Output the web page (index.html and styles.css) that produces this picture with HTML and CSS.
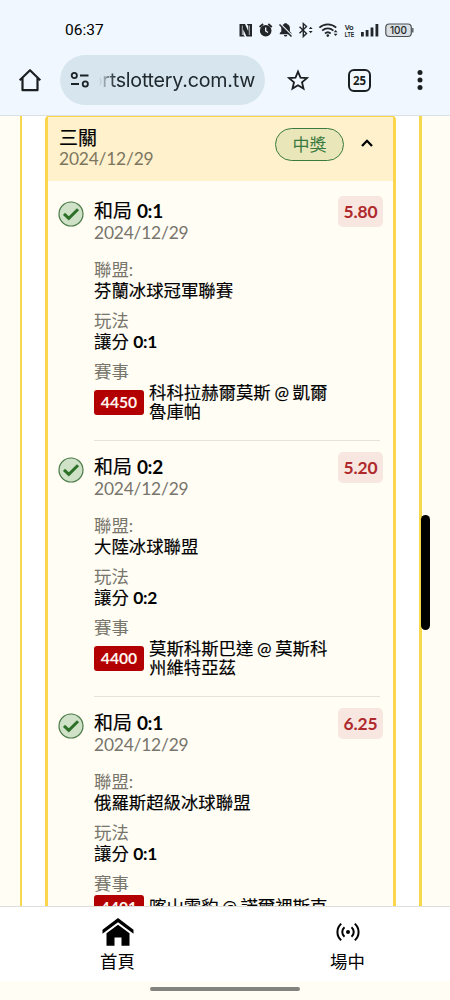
FILE: index.html
```html
<!DOCTYPE html>
<html lang="zh-Hant">
<head>
<meta charset="utf-8">
<title>運彩投注紀錄</title>
<link rel="stylesheet" href="styles.css">
</head>
<body>
<svg width="0" height="0" class="defs">
  <symbol id="check" viewBox="0 0 26 26">
    <circle cx="13" cy="13" r="12" fill="#cfe2c8" stroke="#4b7a48" stroke-width="1.2"/>
    <path d="M6 12.800l4.800 4.500 9.200-9" fill="none" stroke="#2c7128" stroke-width="3"/>
  </symbol>
</svg>
<div class="phone">
  <header class="browser">
    <div class="status">
      <span class="clock">06:37</span>
      <svg class="status-icons" width="180" height="18" viewBox="238 21 180 18">
        <g fill="#222628">
          <path d="M239.500 24h5.500l3.200 7v-5.200l-1.600-1.800h5.400v12.500h-5.500l-3.200-7v5.200l1.600 1.800h-5.400z"/>
          <path d="M242.300 25.500v9.500M249.300 25.500v9.500" stroke="#f0f7ff" stroke-width=".7"/>
          <circle cx="265.700" cy="30.700" r="5.800"/>
          <path d="M259.600 27l3.500-3M271.800 27l-3.500-3" stroke="#222628" stroke-width="1.800"/>
          <path d="M265.700 27.500v3.500l2.200 1.500" fill="none" stroke="#f0f7ff" stroke-width="1.300"/>
          <path d="M279.800 34.300v-1.300l1.500-1.500v-3.500c0-2 1.200-3.500 3-4v-.7h2.600v.7c1.800.5 3 2 3 4v3.500l1.500 1.500v1.300zM284 34.900h3.200c0 2.200-3.200 2.200-3.200 0z"/>
          <path d="M280.500 24l12 12" stroke="#f0f7ff" stroke-width="1.500"/>
          <path d="M279.500 24.500l12 12" stroke="#222628" stroke-width="1.500"/>
          <path d="M299.500 26.800l7 6.800-3.200 3V23.500l3.200 3-7 6.800" fill="none" stroke="#222628" stroke-width="1.400"/>
          <path d="M308.800 29l1.900-2.300 1.900 2.300zM308.800 31l1.900 2.300 1.900-2.300zM333.700 32.200l1.900-2.300 1.900 2.300zM333.700 33.800l1.900 2.300 1.900-2.300z"/>
          <path d="M319.400 27.700c4.700-4.400 12.100-4.400 16.800 0M322.200 30.700c3.300-3 7.900-3 11.200 0M325 33.500c1.700-1.500 4-1.500 5.700 0" fill="none" stroke="#222628" stroke-width="1.800"/>
          <circle cx="327.800" cy="35.600" r="1.300"/>
          <path d="M361 32h2.800v4.500H361zM365.700 30h2.800v6.500h-2.800zM370.600 27.500h2.800v9h-2.800zM375.500 24h2.800v12.500h-2.800z"/>
        </g>
        <text x="344.700" y="29.900" class="volte" textLength="9" lengthAdjust="spacingAndGlyphs">Vo</text>
        <text x="344.700" y="36.500" class="volte" textLength="9.500" lengthAdjust="spacingAndGlyphs">LTE</text>
        <rect x="385.800" y="24" width="25.500" height="12.500" rx="3.500" fill="#d9dfe3" stroke="#4b5053" stroke-width="1.200"/>
        <path d="M412.800 28v4.500" stroke="#4b5053" stroke-width="1.300"/>
        <text x="398.500" y="34" class="battery" text-anchor="middle">100</text>
      </svg>
    </div>
    <div class="toolbar">
      <svg class="home" width="24" height="24" viewBox="0 0 24 24"><path d="M1.700 12.200L12 2.200l10.300 10M4.500 10v12.200h15V10" fill="none" stroke="#1b1f21" stroke-width="2.200" stroke-linejoin="round"/></svg>
      <div class="address">
        <svg width="20" height="18" viewBox="0 0 20 18" fill="none" stroke="#1b2226" stroke-width="1.800"><circle cx="4.300" cy="4.500" r="2.600"/><path d="M10 4.500h8.500M1 13h8"/><circle cx="15.300" cy="13" r="2.600"/></svg>
        <span class="url"><span>ortslottery.com.tw</span></span>
      </div>
      <svg class="star" width="22" height="22" viewBox="0 0 22 22"><path d="M11 2.600l2.500 6 6.400.5-4.900 4.200 1.500 6.300-5.500-3.400-5.500 3.400L7 13.300 2.100 9.100l6.400-.5z" fill="none" stroke="#1b1f21" stroke-width="1.800"/></svg>
      <span class="tabs">25</span>
      <svg class="more" width="6" height="22" viewBox="0 0 6 22" fill="#1b1f21"><circle cx="3" cy="3.500" r="2.500"/><circle cx="3" cy="11" r="2.500"/><circle cx="3" cy="18.500" r="2.500"/></svg>
    </div>
  </header>

  <main class="page">
    <div class="panel">
      <section class="ticket">
        <div class="ticket-head">
          <div>
            <div class="name">三關</div>
            <div class="date">2024/12/29</div>
          </div>
          <span class="won">中獎</span>
          <svg class="chevron" width="14" height="10" viewBox="0 0 14 10"><path d="M2 8l5-5.200L12 8" fill="none" stroke="#000" stroke-width="2.300"/></svg>
        </div>
        <article class="leg">
          <svg class="mark"><use href="#check"/></svg>
          <div class="body">
            <span class="odds">5.80</span>
            <div class="name">和局 <b>0:1</b></div>
            <div class="date">2024/12/29</div>
            <dl>
              <dt>聯盟:</dt><dd>芬蘭冰球冠軍聯賽</dd>
              <dt>玩法</dt><dd>讓分 <b>0:1</b></dd>
              <dt>賽事</dt>
              <dd class="match"><span class="code">4450</span><span>科科拉赫爾莫斯 @ 凱爾<br>魯庫帕</span></dd>
            </dl>
          </div>
        </article>
        <article class="leg">
          <svg class="mark"><use href="#check"/></svg>
          <div class="body">
            <span class="odds">5.20</span>
            <div class="name">和局 <b>0:2</b></div>
            <div class="date">2024/12/29</div>
            <dl>
              <dt>聯盟:</dt><dd>大陸冰球聯盟</dd>
              <dt>玩法</dt><dd>讓分 <b>0:2</b></dd>
              <dt>賽事</dt>
              <dd class="match"><span class="code">4400</span><span>莫斯科斯巴達 @ 莫斯科<br>州維特亞茲</span></dd>
            </dl>
          </div>
        </article>
        <article class="leg">
          <svg class="mark"><use href="#check"/></svg>
          <div class="body">
            <span class="odds">6.25</span>
            <div class="name">和局 <b>0:1</b></div>
            <div class="date">2024/12/29</div>
            <dl>
              <dt>聯盟:</dt><dd>俄羅斯超級冰球聯盟</dd>
              <dt>玩法</dt><dd>讓分 <b>0:1</b></dd>
              <dt>賽事</dt>
              <dd class="match last"><span class="code">4401</span><span>喀山雪豹 @ 諾爾裡斯克</span></dd>
            </dl>
          </div>
        </article>
      </section>
    </div>
    <div class="scroll-thumb"></div>
  </main>

  <nav class="bottom">
    <a class="tab">
      <svg width="32" height="28" viewBox="0 0 32 28"><path d="M16 0l15.500 11.800v4L16 4.200.5 15.800v-4z"/><path d="M16 6.700l11.500 8.500v12.500h-8V19.500h-7v8.200h-8V15.200z"/></svg>
      <span>首頁</span>
    </a>
    <a class="tab">
      <svg width="24" height="28" viewBox="0 0 24 28" fill="none" stroke="#000" stroke-width="2"><circle cx="12" cy="14" r="2" fill="#000" stroke="none"/><path d="M8.500 9.200a6.300 6.300 0 0 0 0 9.600M15.500 9.200a6.300 6.300 0 0 1 0 9.600M5.200 5.700a11 11 0 0 0 0 16.600M18.800 5.700a11 11 0 0 1 0 16.600"/></svg>
      <span>場中</span>
    </a>
  </nav>
  <div class="gesture"><span></span></div>
</div>
</body>
</html>
```
FILE: styles.css
```css
* { box-sizing: border-box; }
body {
  margin: 0;
  font-family: Lato, "Noto Sans CJK TC", sans-serif;
  color: #000;
}
.defs { position: absolute; }
.phone {
  width: 450px;
  height: 1000px;
  display: flex;
  flex-direction: column;
  overflow: hidden;
  background: #fffdf4;
}

.browser { height: 115px; flex: none; background: #f0f7ff; }
.status {
  height: 52px;
  padding: 21px 32px 0 65px;
  display: flex;
  justify-content: space-between;
}
.clock { font: 400 15.5px/19px Roboto, sans-serif; letter-spacing: 0; }
.volte { font: bold 7px "Liberation Sans", sans-serif; fill: #222628; }
.battery { font: 500 10px Inter, sans-serif; fill: #222628; }
.toolbar { display: flex; align-items: center; height: 56px; padding-left: 18px; }
.address {
  width: 205px;
  height: 50px;
  margin-left: 18px;
  padding-left: 10px;
  border-radius: 25px;
  background: #d7e6ee;
  display: flex;
  align-items: center;
}
.url {
  width: 156px;
  margin-left: 9px;
  overflow: hidden;
  display: flex;
  justify-content: flex-end;
  font: 19.7px/28px Inter, sans-serif;
  letter-spacing: -0.25px;
  color: #20292e;
  -webkit-mask-image: linear-gradient(to right, transparent, #000 16px);
  mask-image: linear-gradient(to right, transparent, #000 16px);
}
.url span { flex: none; }
.star { margin-left: 22px; }
.tabs {
  width: 23px;
  height: 23px;
  margin-left: 39px;
  border: 2px solid #1b1f21;
  border-radius: 6px;
  font: bold 11.5px/19px "Open Sans", sans-serif;
  text-align: center;
  color: #1b1f21;
}
.more { margin-left: 46px; }

.page { position: relative; height: 791px; flex: none; overflow: hidden; padding: 0 28px 0 20px; border-top: 1px solid #d9e1e5; }
.panel {
  height: 792px;
  border: solid #f5d84d;
  border-width: 0 3px 0 2px;
  background: #fff;
  padding: 0 23px;
}
.ticket {
  height: 900px;
  margin-top: -1px;
  border: solid #fbd54c;
  border-width: 2px 3px;
  border-radius: 5px 5px 0 0;
  background: #fffdf4;
}
.ticket-head {
  height: 64px;
  padding: 10px 19px 0 11px;
  display: flex;
  align-items: flex-start;
  background: #fff1cc;
}
.name { font-size: 19px; line-height: 22px; -webkit-text-stroke: 0.2px #000; }
.date { font-size: 17.4px; line-height: 20px; letter-spacing: -0.2px; color: #78756c; }
.leg .date { padding-top: 1px; }
.ticket-head .date { color: #7d765f; }
b { font-weight: 700; -webkit-text-stroke: 0; letter-spacing: -0.3px; }
.won {
  width: 69px;
  height: 33px;
  margin-left: auto;
  margin-top: 1px;
  border: 1px solid #3b7a3e;
  border-radius: 17px;
  background: #e9e6b9;
  color: #3b7a3e;
  font-size: 17px;
  line-height: 31px;
  text-align: center;
}
.chevron { margin: 11px 0 0 16px; }

.leg { height: 256px; padding: 19px 10px 0; display: flex; }
.mark { width: 26px; height: 26px; flex: none; margin: 1px 10px 0 0; }
.body { flex: 1; position: relative; height: 238px; }
.leg:not(:last-child) .body::after {
  content: "";
  display: block;
  margin: 19px 3px 0 0;
  border-bottom: 1px solid #e5e3dc;
}
.odds {
  position: absolute;
  right: 0;
  top: -4px;
  width: 45px;
  height: 31px;
  border-radius: 5px;
  background: #f8e6e0;
  color: #ae292c;
  font-size: 17.4px;
  font-weight: 700;
  line-height: 32px;
  letter-spacing: -0.1px;
  text-align: center;
}
dl { margin: 17px 0 0; font-size: 17.4px; }
dt { line-height: 20px; color: #78756c; }
dd { margin: 0 0 10px; line-height: 21px; -webkit-text-stroke: 0.15px #000; }
dd + dt { padding-top: 0; }
.match { display: flex; align-items: center; gap: 5px; margin: 2px 0 0; line-height: 18.5px; word-spacing: -0.8px; }
.match.last { margin-top: 1px; }
.code {
  width: 50px;
  height: 25px;
  border-radius: 3px;
  background: #b30003;
  color: #fff4ed;
  font-size: 15.7px;
  font-weight: 700;
  line-height: 25px;
  text-align: center;
  -webkit-text-stroke: 0;
}
.scroll-thumb {
  position: absolute;
  left: 421px;
  top: 399px;
  width: 9px;
  height: 115px;
  border-radius: 5px;
  background: #000;
}

.bottom {
  height: 75px;
  flex: none;
  display: flex;
  justify-content: space-between;
  padding: 0 54px 0 69px;
  border-top: 1px solid #dededb;
  background: #fff;
}
.tab { width: 97px; display: flex; flex-direction: column; align-items: center; padding-top: 11px; font-size: 17.4px; line-height: 26px; }
.tab span { margin-top: 3px; }
.gesture { flex: 1; display: flex; justify-content: center; padding-top: 6px; }
.gesture span { width: 150px; height: 4px; border-radius: 2px; background: #83837d; }
```
